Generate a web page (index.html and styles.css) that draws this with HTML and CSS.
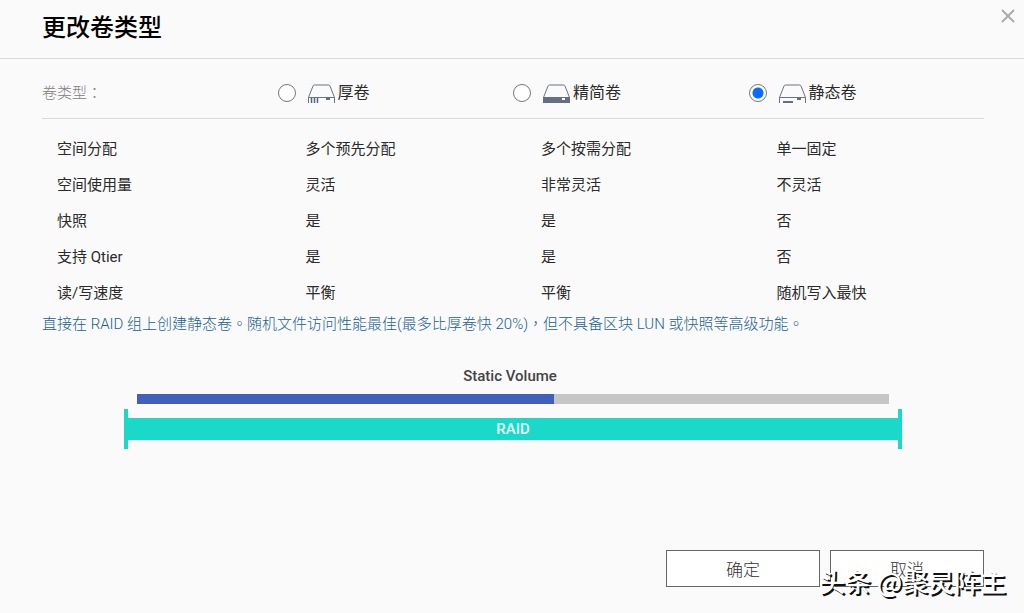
FILE: index.html
```html
<!DOCTYPE html>
<html lang="zh-CN">
<head>
<meta charset="utf-8">
<meta name="viewport" content="width=device-width, initial-scale=1">
<title>更改卷类型</title>
<link rel="stylesheet" href="styles.css">
</head>
<body>
<form class="dialog">
  <header class="dialog-header">
    <h1 class="dialog-title">更改卷类型</h1>
    <button class="close" type="button" aria-label="关闭">
      <svg width="14" height="14" viewBox="0 0 14 14" aria-hidden="true"><path d="M1 1L13 13M13 1L1 13" fill="none" stroke="#a9a9a9" stroke-width="1.8"/></svg>
    </button>
  </header>

  <main class="dialog-body">
    <table class="compare">
      <thead>
        <tr>
          <th class="type-label" scope="row" lang="zh-TW">卷类型：</th>
          <th scope="col">
            <label class="option" for="thick">
              <input class="radio" type="radio" id="thick" name="volume">
              <svg class="drive" width="27" height="19" viewBox="0 0 27 19" aria-hidden="true">
                <path d="M.5 19V13.500L5 2Q5.400 1 6.500 1H20.500Q21.600 1 22 2L26.500 13.500V19M.5 13.500H26.500" fill="none" stroke="#6b7385"/>
                <path d="M3.500 14V19M6.500 14V19M9.500 14V19" stroke="#55658a" stroke-width="1.500"/>
                <path d="M18 14H22V16H18Z" fill="#5f6880"/>
              </svg>
              <span>厚卷</span>
            </label>
          </th>
          <th scope="col">
            <label class="option" for="thin">
              <input class="radio" type="radio" id="thin" name="volume">
              <svg class="drive" width="27" height="19" viewBox="0 0 27 19" aria-hidden="true">
                <path d="M.5 13.500L5 2Q5.400 1 6.500 1H20.500Q21.600 1 22 2L26.500 13.500" fill="none" stroke="#6b7385"/>
                <path d="M0 13H27V19H0Z" fill="#666e82"/>
                <path d="M19 14H22V16H19Z" fill="#fff"/>
              </svg>
              <span>精简卷</span>
            </label>
          </th>
          <th scope="col">
            <label class="option" for="static">
              <input class="radio" type="radio" id="static" name="volume" checked>
              <svg class="drive" width="27" height="19" viewBox="0 0 27 19" aria-hidden="true">
                <path d="M.5 19V13.500L5 2Q5.400 1 6.500 1H20.500Q21.600 1 22 2L26.500 13.500V19M.5 13.500H26.500" fill="none" stroke="#6b7385"/>
                <path d="M4 17H14V19H4ZM18 14H22V16H18Z" fill="#666e82"/>
              </svg>
              <span>静态卷</span>
            </label>
          </th>
        </tr>
      </thead>
      <tbody>
        <tr><th scope="row">空间分配</th><td>多个预先分配</td><td>多个按需分配</td><td>单一固定</td></tr>
        <tr><th scope="row">空间使用量</th><td>灵活</td><td>非常灵活</td><td>不灵活</td></tr>
        <tr><th scope="row">快照</th><td>是</td><td>是</td><td>否</td></tr>
        <tr><th scope="row">支持 Qtier</th><td>是</td><td>是</td><td>否</td></tr>
        <tr><th scope="row">读/写速度</th><td>平衡</td><td>平衡</td><td>随机写入最快</td></tr>
      </tbody>
    </table>

    <p class="description" lang="zh-TW">直接在 RAID 组上创建静态卷。随机文件访问性能最佳(最多比厚卷快 20%)，但不具备区块 LUN 或快照等高级功能。</p>

    <section class="diagram">
      <div class="diagram-title">Static Volume</div>
      <div class="track"><div class="track-fill"></div></div>
      <div class="raid"><div class="raid-band">RAID</div></div>
    </section>
  </main>

  <footer class="actions">
    <button class="action" type="submit">确定</button>
    <button class="action" type="button">取消</button>
  </footer>
  <div class="watermark">头条 @聚灵阵主</div>
</form>
</body>
</html>
```
FILE: styles.css
```css
* {
  box-sizing: border-box;
}

body {
  margin: 0;
  background: #fafafa;
  color: #2b2b2b;
  font-family: Roboto, "Noto Sans CJK SC", sans-serif;
  font-size: 15px;
  line-height: 20px;
}

.dialog {
  position: relative;
  display: flex;
  flex-direction: column;
  min-height: 100vh;
}

.dialog-header {
  display: flex;
  justify-content: space-between;
  align-items: flex-start;
  padding: 8px 8px 10px 42px;
  border-bottom: 1px solid #d9d9d9;
}

.dialog-title {
  margin: 0;
  color: #000;
  font-size: 24px;
  font-weight: 500;
  line-height: 40px;
}

.close {
  display: flex;
  padding: 1px;
  border: 0;
  background: none;
}

.dialog-body {
  flex: 1;
  padding: 0 40px 0 42px;
}

.compare {
  width: 100%;
  table-layout: fixed;
  border-collapse: collapse;
}

.compare th,
.compare td {
  height: 36px;
  padding: 0 0 0 28px;
  font-weight: 400;
  text-align: left;
}

.compare tbody th {
  padding-left: 15px;
}

.compare thead th {
  height: 59px;
  padding: 10px 0 0;
  border-bottom: 1px solid #d9d9d9;
}

.compare thead .type-label {
  color: #808080;
  font-family: Roboto, "Noto Sans CJK TC", sans-serif;
  font-weight: 300;
}

.compare tbody::before {
  display: block;
  height: 12px;
  content: "";
}

.option {
  display: flex;
  align-items: center;
  font-size: 16px;
}

.radio {
  width: 18px;
  height: 18px;
  margin: 0 12px 0 0;
  border: 1px solid #777;
  border-radius: 50%;
  background: #fff;
  appearance: none;
}

.radio:checked {
  background: radial-gradient(circle, #0a6cff 5px, #fff 6px);
}

.drive {
  margin-right: 3px;
}

.description {
  margin: 3px 0 0;
  color: #1d5f91;
  font-family: Roboto, "Noto Sans CJK TC", sans-serif;
  font-weight: 300;
  white-space: nowrap;
}

.diagram {
  padding: 32px 82px 0;
}

.diagram-title {
  padding-right: 6px;
  color: #444;
  font-weight: 500;
  text-align: center;
}

.track {
  height: 10px;
  margin: 8px 13px 5px;
  background: #c6c6c6;
}

.track-fill {
  width: 55.4%;
  height: 100%;
  background: #4060bc;
}

.raid {
  padding: 9px 0;
  border: solid #1bd9c8;
  border-width: 0 4px;
}

.raid-band {
  background: #1bd9c8;
  color: #e9fffc;
  font-weight: 500;
  line-height: 22px;
  text-align: center;
}

.actions {
  display: flex;
  justify-content: flex-end;
  gap: 10px;
  padding: 0 40px 26px;
}

.action {
  width: 154px;
  height: 37px;
  padding: 0;
  border: 1px solid #666;
  background: #fff;
  color: #333;
  font: 300 17px "Noto Sans CJK SC", sans-serif;
}

.watermark {
  position: absolute;
  right: 18px;
  bottom: 14px;
  color: #fff;
  font: 500 26px/36px "Noto Sans CJK SC", sans-serif;
  text-shadow: 2px 2px 0 #111;
  white-space: nowrap;
  pointer-events: none;
}
```
